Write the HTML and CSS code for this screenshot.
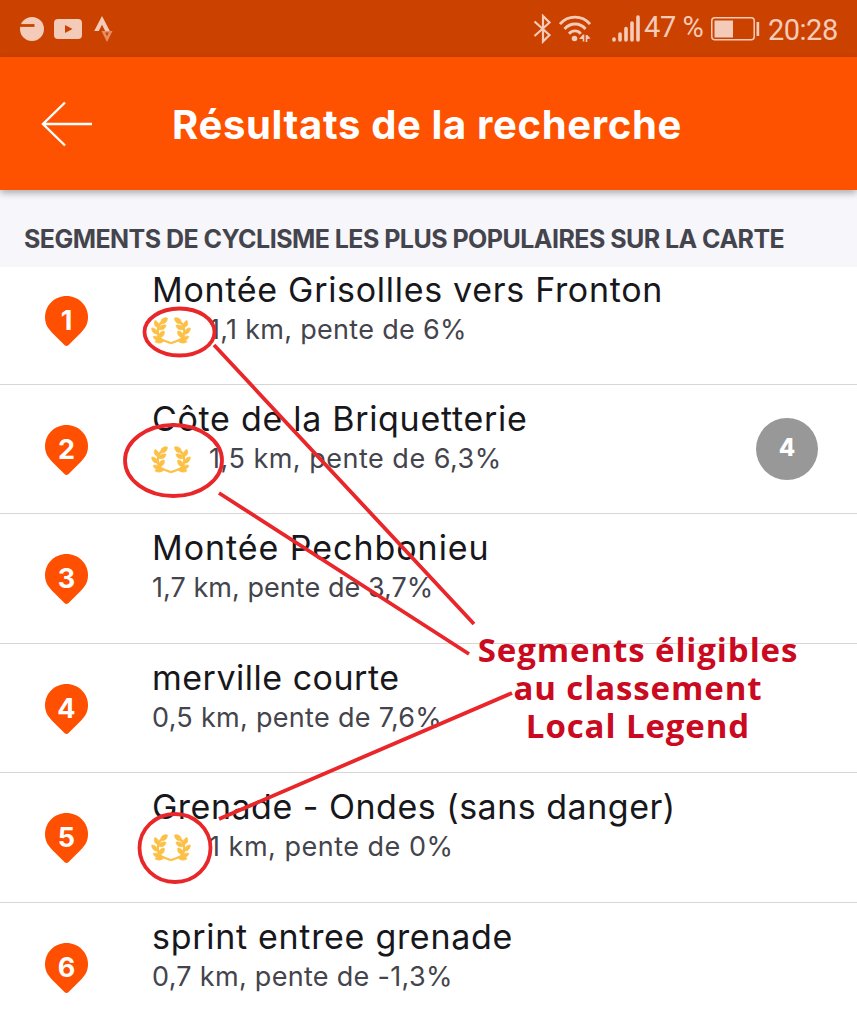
FILE: index.html
```html
<!DOCTYPE html>
<html lang="fr">
<head>
    <meta charset="UTF-8">
    <meta name="viewport" content="width=device-width, initial-scale=1.0">
    <title>Résultats de la recherche</title>
    <link rel="stylesheet" href="styles.css">
</head>
<body>

    <!-- Symboles partagés -->
    <svg width="0" height="0" class="symbols">
        <symbol id="pin" viewBox="0 0 43 50">
            <path fill="#ff4f00" d="M21.5 0C9.6 0 0 9.4 0 21.2c0 7 3.2 11.5 7.6 16L19.7 49.2Q21.5 50.8 23.3 49.2L35.4 37.2c4.400-4.500 7.600-9 7.600-16C43 9.4 33.4 0 21.5 0z"/>
        </symbol>
        <symbol id="half-laurel" viewBox="0 0 20 28">
            <g fill="#fcc047" stroke="#fcc047" stroke-width=".8" stroke-linejoin="round">
                <path d="M10 6.500c-.5-4 2-6.200 6.300-5.500C16.500 4.500 14 7.200 10 6.500z"/>
                <path d="M7 10.500C3.500 9.500 2.500 6.500 4 3.500c3.200 1.200 4.500 4 3 7z"/>
                <path d="M8 12.500c.3-3.500 3-5.200 7-4.300-.5 3.500-3.500 5.200-7 4.300z"/>
                <path d="M6.500 17C2.800 17.200.6 14.500.8 11c3.500.2 5.900 2.600 5.700 6z"/>
                <path d="M8.300 20.500c-1-3.500 1-6.200 4.800-6.500.9 3.500-1.200 6.300-4.800 6.500z"/>
                <path d="M9.500 22.500c-3 1.500-6.500.5-7.300-3C5.500 18.500 8.500 19.500 9.500 22.500z"/>
                <path d="M13 23.500c-2 3-6.200 3.300-9 1.300 1.800-3 6-3.800 9-1.300z"/>
            </g>
            <path d="M11 5C6 9 5.300 17 9.500 21.500c1.200 1.200 2.700 1.700 4 2.200l6.500 2.500" fill="none" stroke="#fcc047" stroke-width="2.300"/>
        </symbol>
        <symbol id="laurel" viewBox="0 0 40 28">
            <use href="#half-laurel" width="20" height="28"/>
            <use href="#half-laurel" width="20" height="28" transform="translate(40 0) scale(-1 1)"/>
        </symbol>
    </svg>

    <div class="screen">

        <!-- Barre d'état -->
        <div class="status-bar">
            <div class="status-left">
                <svg width="24" height="24" viewBox="0 0 24 24"><circle cx="12" cy="12" r="12" fill="#f3cbb8"/><path fill="none" stroke="#cb4200" stroke-width="2.800" d="M0 8.500h14.500"/></svg>
                <svg width="28" height="20" viewBox="0 0 28 20"><path fill="#f3cbb8" fill-rule="evenodd" d="M4 0h20q4 0 4 4v12q0 4-4 4H4q-4 0-4-4V4q0-4 4-4zM11 6v8l7.500-4z"/></svg>
                <svg class="strava" width="19" height="26" viewBox="0 0 19 26"><path fill="#f3cbb8" d="M8 0l7.800 15h-4.600L8 8.700 4.800 15H.2z"/><path fill="#e48e64" fill-rule="evenodd" d="M7.500 15h11L13 26zM11.200 16.500l1.800 3.800 1.800-3.800z"/></svg>
            </div>
            <div class="status-right">
                <svg class="bluetooth" width="20" height="30" viewBox="0 0 20 30"><path fill="none" stroke="#f3cbb8" stroke-width="2.200" d="M1.500 7.500l15 13.500-6.500 6.500V2l6.500 6.500-15 13.500"/></svg>
                <svg class="wifi" width="32" height="28" viewBox="0 0 32 28">
                    <g fill="none" stroke="#f3cbb8" stroke-width="2.800">
                        <path d="M1 9c8-9.300 22-9.300 30 0"/>
                        <path d="M5.500 14c6-6.700 15.500-6.700 21 0"/>
                        <path d="M10 18.800c3.500-3.800 8.500-3.800 11.800 0"/>
                    </g>
                    <circle cx="15.500" cy="23.500" r="2.800" fill="#f3cbb8"/>
                    <path fill="#f3cbb8" d="M20 24l4-4.500h1.300v7h-1.600V24zM26.700 20h1.600l3.200 3.500-3.200.5v3h-1.600z"/>
                </svg>
                <svg class="signal" width="28" height="27" viewBox="0 0 28 27"><path fill="none" stroke="#f3cbb8" stroke-width="3.600" stroke-linecap="round" d="M2 24v1M8 19v6M14 13.500V25M20 8v17M26 2v23"/></svg>
                <span class="battery-level">47 %</span>
                <svg class="battery" width="49" height="24" viewBox="0 0 49 24"><rect x=".8" y=".8" width="42.400" height="22" rx="3" fill="none" stroke="#f3cbb8" stroke-width="1.500"/><path fill="#f3cbb8" d="M3.500 3.500h18.500v17H3.500zM45.500 5h2.700v14h-2.700z"/></svg>
                <span class="clock">20:28</span>
            </div>
        </div>

        <header class="app-bar">
            <svg class="back" width="52" height="46" viewBox="0 0 52 46"><path fill="none" stroke="#fff" stroke-width="2.400" d="M24 1.500L2 23l22 21.500M2 23h49"/></svg>
            <h1 class="app-title">Résultats de la recherche</h1>
        </header>

        <h2 class="section-title">SEGMENTS DE CYCLISME LES PLUS POPULAIRES SUR LA CARTE</h2>

        <!-- Liste des segments -->
        <ul class="segments">
            <li class="segment">
                <div class="pin"><svg><use href="#pin"/></svg><span>1</span></div>
                <div class="info">
                    <div class="name">Montée Grisollles vers Fronton</div>
                    <div class="detail"><svg class="laurel"><use href="#laurel"/></svg><span>1,1 km, pente de 6%</span></div>
                </div>
            </li>
            <li class="segment">
                <div class="pin"><svg><use href="#pin"/></svg><span>2</span></div>
                <div class="info">
                    <div class="name">Côte de la Briquetterie</div>
                    <div class="detail wide"><svg class="laurel"><use href="#laurel"/></svg><span>1,5 km, pente de 6,3%</span></div>
                </div>
                <span class="count">4</span>
            </li>
            <li class="segment">
                <div class="pin"><svg><use href="#pin"/></svg><span>3</span></div>
                <div class="info">
                    <div class="name wide">Montée Pechbonieu</div>
                    <div class="detail tight"><span>1,7 km, pente de 3,7%</span></div>
                </div>
            </li>
            <li class="segment">
                <div class="pin"><svg><use href="#pin"/></svg><span>4</span></div>
                <div class="info">
                    <div class="name tight">merville courte</div>
                    <div class="detail"><span>0,5 km, pente de 7,6%</span></div>
                </div>
            </li>
            <li class="segment">
                <div class="pin"><svg><use href="#pin"/></svg><span>5</span></div>
                <div class="info">
                    <div class="name tight">Grenade - Ondes (sans danger)</div>
                    <div class="detail wide"><svg class="laurel"><use href="#laurel"/></svg><span>1 km, pente de 0%</span></div>
                </div>
            </li>
            <li class="segment">
                <div class="pin"><svg><use href="#pin"/></svg><span>6</span></div>
                <div class="info">
                    <div class="name">sprint entree grenade</div>
                    <div class="detail"><span>0,7 km, pente de -1,3%</span></div>
                </div>
            </li>
        </ul>

        <!-- Annotations -->
        <svg class="marks" width="857" height="1024" viewBox="0 0 857 1024">
            <g fill="none" stroke="#e9262a" stroke-width="3.800">
                <ellipse cx="179.500" cy="332" rx="35" ry="23.500"/>
                <ellipse cx="173.500" cy="460.500" rx="48.500" ry="35.500"/>
                <ellipse cx="175" cy="848" rx="35.500" ry="34"/>
                <path d="M214 345L474 624M219 493L469 654M219 819L512 693"/>
            </g>
        </svg>
        <div class="note">
            <div>Segments éligibles</div>
            <div>au classement</div>
            <div>Local Legend</div>
        </div>
    </div>

</body>
</html>
```
FILE: styles.css
```css
* {
    margin: 0;
    padding: 0;
    box-sizing: border-box;
}

body {
    font-family: Inter, "Liberation Sans", sans-serif;
    background: #fff;
    color: #17171c;
}

svg {
    display: block;
    flex: none;
}

.symbols {
    position: absolute;
}

.screen {
    position: relative;
    width: 857px;
    height: 1024px;
    overflow: hidden;
    white-space: nowrap;
}

/* Barre d'état */
.status-bar {
    display: flex;
    justify-content: space-between;
    height: 57px;
    padding: 0 20px;
    background: #cb4200;
    color: #f3cbb8;
    font-family: Roboto, sans-serif;
}

.status-left,
.status-right {
    display: flex;
    align-items: center;
    height: 57px;
}

.status-left {
    gap: 10px;
}

.strava {
    margin-left: 2px;
}

.wifi {
    margin-left: 6px;
}

.signal {
    margin-left: 21px;
}

.battery-level {
    width: 60px;
    margin: -3px 0 0 4px;
    font-size: 29px;
    letter-spacing: -0.4px;
}

.battery {
    margin-left: 7px;
}

.clock {
    width: 69px;
    margin: 2px 0 0 8px;
    font-size: 29px;
    letter-spacing: -0.5px;
}

/* En-tête */
.app-bar {
    position: relative;
    z-index: 1;
    display: flex;
    align-items: center;
    height: 133px;
    padding-left: 41px;
    background: #ff5200;
    box-shadow: 0 3px 7px rgba(0, 0, 0, 0.3);
    color: #fff;
}

.app-title {
    margin: 2px 0 0 79px;
    font-size: 40px;
    font-weight: 700;
    letter-spacing: 0.65px;
}

.section-title {
    height: 77px;
    padding: 34px 0 0 24px;
    background: #f6f6fb;
    color: #44444d;
    font-size: 25px;
    font-weight: 700;
    letter-spacing: -0.54px;
    line-height: 30px;
}

/* Liste */
.segments {
    height: 757px;
    overflow: hidden;
    list-style: none;
}

.segment {
    display: flex;
    height: 129.4px;
    padding: 14px 39px 0 45px;
    border-bottom: 1px solid #d7d7d7;
}

.segment:first-child {
    height: 118px;
    padding-top: 2.6px;
}

.pin {
    display: grid;
    width: 43px;
    height: 50px;
    margin-top: 26px;
}

.pin svg,
.pin span {
    grid-area: 1 / 1;
}

.pin svg {
    width: 43px;
    height: 50px;
}

.pin span {
    color: #fff;
    font-size: 27px;
    font-weight: 700;
    line-height: 49px;
    text-align: center;
}

.info {
    margin-left: 64px;
    flex: 1;
}

.name {
    font-size: 34px;
    letter-spacing: 0.7px;
    line-height: 40px;
}

.name.tight {
    letter-spacing: 0.5px;
}

.name.wide {
    letter-spacing: 0.95px;
}

.detail {
    display: flex;
    color: #44444d;
    font-size: 27px;
    letter-spacing: 0.3px;
    line-height: 40px;
}

.detail.tight {
    letter-spacing: 0.05px;
}

.detail.wide {
    letter-spacing: 0.5px;
}

.laurel {
    width: 40px;
    height: 28px;
    margin: 7px 18px 0 -1px;
}

.count {
    width: 62px;
    height: 62px;
    margin-top: 19px;
    border-radius: 50%;
    background: #989898;
    color: #fff;
    font-size: 24px;
    font-weight: 800;
    line-height: 60px;
    text-align: center;
}

/* Annotations au-dessus de la liste */
.marks {
    position: absolute;
    z-index: 2;
    top: 0;
    left: 0;
}

.note {
    position: absolute;
    z-index: 3;
    top: 631px;
    left: 438px;
    width: 400px;
    color: #c90a20;
    font-family: "Open Sans", sans-serif;
    font-size: 33px;
    font-weight: 700;
    letter-spacing: 0.9px;
    line-height: 38px;
    text-align: center;
}
```
